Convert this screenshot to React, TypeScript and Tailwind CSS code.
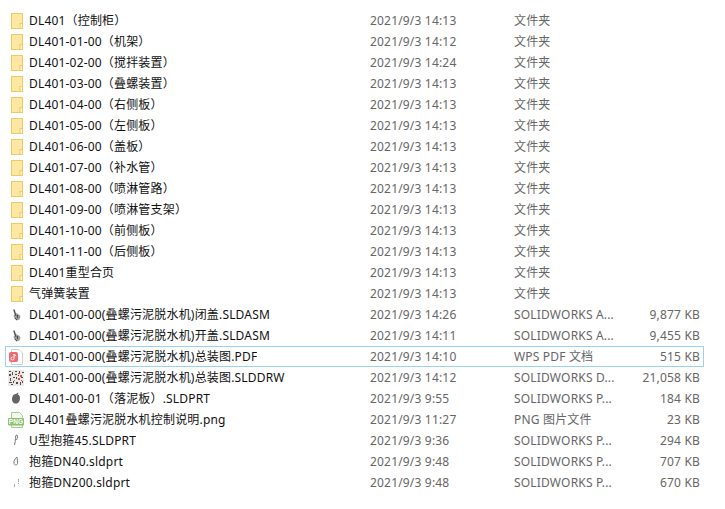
import React from 'react';

type Row = { name: string; date: string; type: string; size?: string; icon: string };

const folders: [string, string][] = [
    ['DL401（控制柜）', '14:13'],
    ['DL401-01-00（机架）', '14:12'],
    ['DL401-02-00（搅拌装置）', '14:24'],
    ['DL401-03-00（叠螺装置）', '14:13'],
    ['DL401-04-00（右侧板）', '14:13'],
    ['DL401-05-00（左侧板）', '14:13'],
    ['DL401-06-00（盖板）', '14:13'],
    ['DL401-07-00（补水管）', '14:13'],
    ['DL401-08-00（喷淋管路）', '14:13'],
    ['DL401-09-00（喷淋管支架）', '14:13'],
    ['DL401-10-00（前侧板）', '14:13'],
    ['DL401-11-00（后侧板）', '14:13'],
    ['DL401重型合页', '14:13'],
    ['气弹簧装置', '14:13'],
];

const rows: Row[] = [
    ...folders.map(([name, time]) => ({ name, date: `2021/9/3 ${time}`, type: '文件夹', icon: 'folder' })),
    { name: 'DL401-00-00(叠螺污泥脱水机)闭盖.SLDASM', date: '2021/9/3 14:26', type: 'SOLIDWORKS A...', size: '9,877 KB', icon: 'asm' },
    { name: 'DL401-00-00(叠螺污泥脱水机)开盖.SLDASM', date: '2021/9/3 14:11', type: 'SOLIDWORKS A...', size: '9,455 KB', icon: 'asm' },
    { name: 'DL401-00-00(叠螺污泥脱水机)总装图.PDF', date: '2021/9/3 14:10', type: 'WPS PDF 文档', size: '515 KB', icon: 'pdf' },
    { name: 'DL401-00-00(叠螺污泥脱水机)总装图.SLDDRW', date: '2021/9/3 14:12', type: 'SOLIDWORKS D...', size: '21,058 KB', icon: 'drw' },
    { name: 'DL401-00-01（落泥板）.SLDPRT', date: '2021/9/3 9:55', type: 'SOLIDWORKS P...', size: '184 KB', icon: 'part' },
    { name: 'DL401叠螺污泥脱水机控制说明.png', date: '2021/9/3 11:27', type: 'PNG 图片文件', size: '23 KB', icon: 'png' },
    { name: 'U型抱箍45.SLDPRT', date: '2021/9/3 9:36', type: 'SOLIDWORKS P...', size: '294 KB', icon: 'clamp' },
    { name: '抱箍DN40.sldprt', date: '2021/9/3 9:48', type: 'SOLIDWORKS P...', size: '707 KB', icon: 'ring' },
    { name: '抱箍DN200.sldprt', date: '2021/9/3 9:48', type: 'SOLIDWORKS P...', size: '670 KB', icon: 'dots' },
];

function FileIcon({ kind }: { kind: string }) {
    if (kind === 'folder')
        return (
            <svg width="16" height="16" viewBox="0 0 16 16">
                <rect x="3.5" y="0.5" width="11" height="15" fill="#fde7a3" stroke="#eccb63" />
                <rect x="12" y="10.5" width="2.500" height="5" fill="#fff4cc" stroke="#eccb63" />
            </svg>
        );
    if (kind === 'asm')
        return (
            <svg width="16" height="16" viewBox="0 0 16 16">
                <path d="M5 2.500l1.500-.5 1.500 4 1 .5 1 .5 1.500 1 1 1.500-1 3-3 1-2-2-1-3 1-1z" fill="#9a9a9a" />
                <path d="M6 3l2 6M9.500 8l0 3M7 11l2 2" stroke="#4a4a4a" fill="none" />
            </svg>
        );
    if (kind === 'pdf')
        return (
            <svg width="16" height="16" viewBox="0 0 16 16">
                <path d="M3.500 .5h7.500l3.500 3.500v11.500h-11z" fill="#fff" stroke="#cfcfcf" />
                <rect x="1" y="3" width="9" height="10" rx="2" fill="#ee6a72" />
                <path d="M6 5v4.500a1.500 1.500 0 1 1-1.500-1.500M6 5.500l2 1" stroke="#fff" fill="none" />
            </svg>
        );
    if (kind === 'drw')
        return (
            <svg width="16" height="16" viewBox="0 0 16 16">
                <rect x="0" y="0" width="16" height="16" fill="#ebe8e6" />
                <path d="M1 1h2v1H1zM4 2h1v3H4zM7 1h2v1H7zM11 1h1v2h-1zM14 2h2v1h-2zM1 4h2v2H1zM7 4h2v1H7zM10 5h1v1h-1zM2 8h1v3H2zM5 7h2v1H5zM8 7h1v2H8zM13 7h2v1h-2zM1 12h3v1H1zM5 11h1v2H5zM8 12h2v2H8zM12 12h1v3h-1zM14 11h1v2h-1zM3 14h2v1H3z" fill="#4d4d4d" />
                <path d="M10 3h2v1h-2zM12 5h2v2h-2zM10 8h2v2h-2zM6 10h1v1H6zM13 10h1v1h-1z" fill="#d0524f" />
            </svg>
        );
    if (kind === 'part')
        return (
            <svg width="16" height="16" viewBox="0 0 16 16">
                <path d="M8 3c1-.5 1.500-1.500 2.500-1.500-.2 1-.5 1.500-.8 2 1.800.5 2.300 2 2.300 4s-1.200 4.500-3 5c-1 .2-1.500-.2-2.500 0C5 12 4 10 4 8s1.500-5.500 4-5z" fill="#666365" />
            </svg>
        );
    if (kind === 'png')
        return (
            <svg width="16" height="16" viewBox="0 0 16 16">
                <path d="M3.500 .5h8l3 3v12h-11z" fill="#f2f8ec" stroke="#a9cf8d" />
                <rect x="0" y="6" width="16" height="7.500" rx="1" fill="#8dbf72" />
                <text x="8" y="12" textAnchor="middle" fontSize="6.500" fontWeight="700" fill="#fff" fontFamily="Liberation Sans, sans-serif">PNG</text>
            </svg>
        );
    if (kind === 'clamp')
        return (
            <svg width="16" height="16" viewBox="0 0 16 16">
                <path d="M9 2c-1.500 0-1.500 1.500-1.500 3.500s-.5 4-1 6.500M9 2c.8 1 .5 3-.5 5" stroke="#777" fill="none" />
            </svg>
        );
    if (kind === 'ring')
        return (
            <svg width="16" height="16" viewBox="0 0 16 16">
                <path d="M9 3C7 4.500 5.500 7 6 9.500c.5 2 3 2 3.500 0 .3-2-.5-4.500-.5-6.500z" stroke="#777" fill="none" />
            </svg>
        );
    return (
        <svg width="16" height="16" viewBox="0 0 16 16">
            <path d="M10 4h1v3h-1zM10 8h1v1h-1zM6 9h1v3H6z" fill="#aaa" />
        </svg>
    );
}

export default function App() {
    return (
        <div className="h-[509px] w-[725px] overflow-hidden bg-white pl-[5px] pt-[10px] font-['Noto_Sans','Noto_Sans_CJK_SC',sans-serif] text-[12px] tracking-[0.18px]">
            {rows.map((row) => (
                <div
                    key={row.name}
                    className={`grid h-[21px] w-[699px] grid-cols-[364px_144px_1fr] items-center border ${
                        row.icon === 'pdf' ? 'border-[#99d1ff]' : 'border-transparent'
                    }`}
                >
                    <div className="flex min-w-0 items-center">
                        <span className="ml-[2px] mr-[5px] flex w-[16px] shrink-0">
                            <FileIcon kind={row.icon} />
                        </span>
                        <span className="truncate text-[#111111]">{row.name}</span>
                    </div>
                    <span className="text-[#666666]">{row.date}</span>
                    <div className="flex justify-between pr-[3px] text-[#666666]">
                        <span>{row.type}</span>
                        <span>{row.size}</span>
                    </div>
                </div>
            ))}
        </div>
    );
}
